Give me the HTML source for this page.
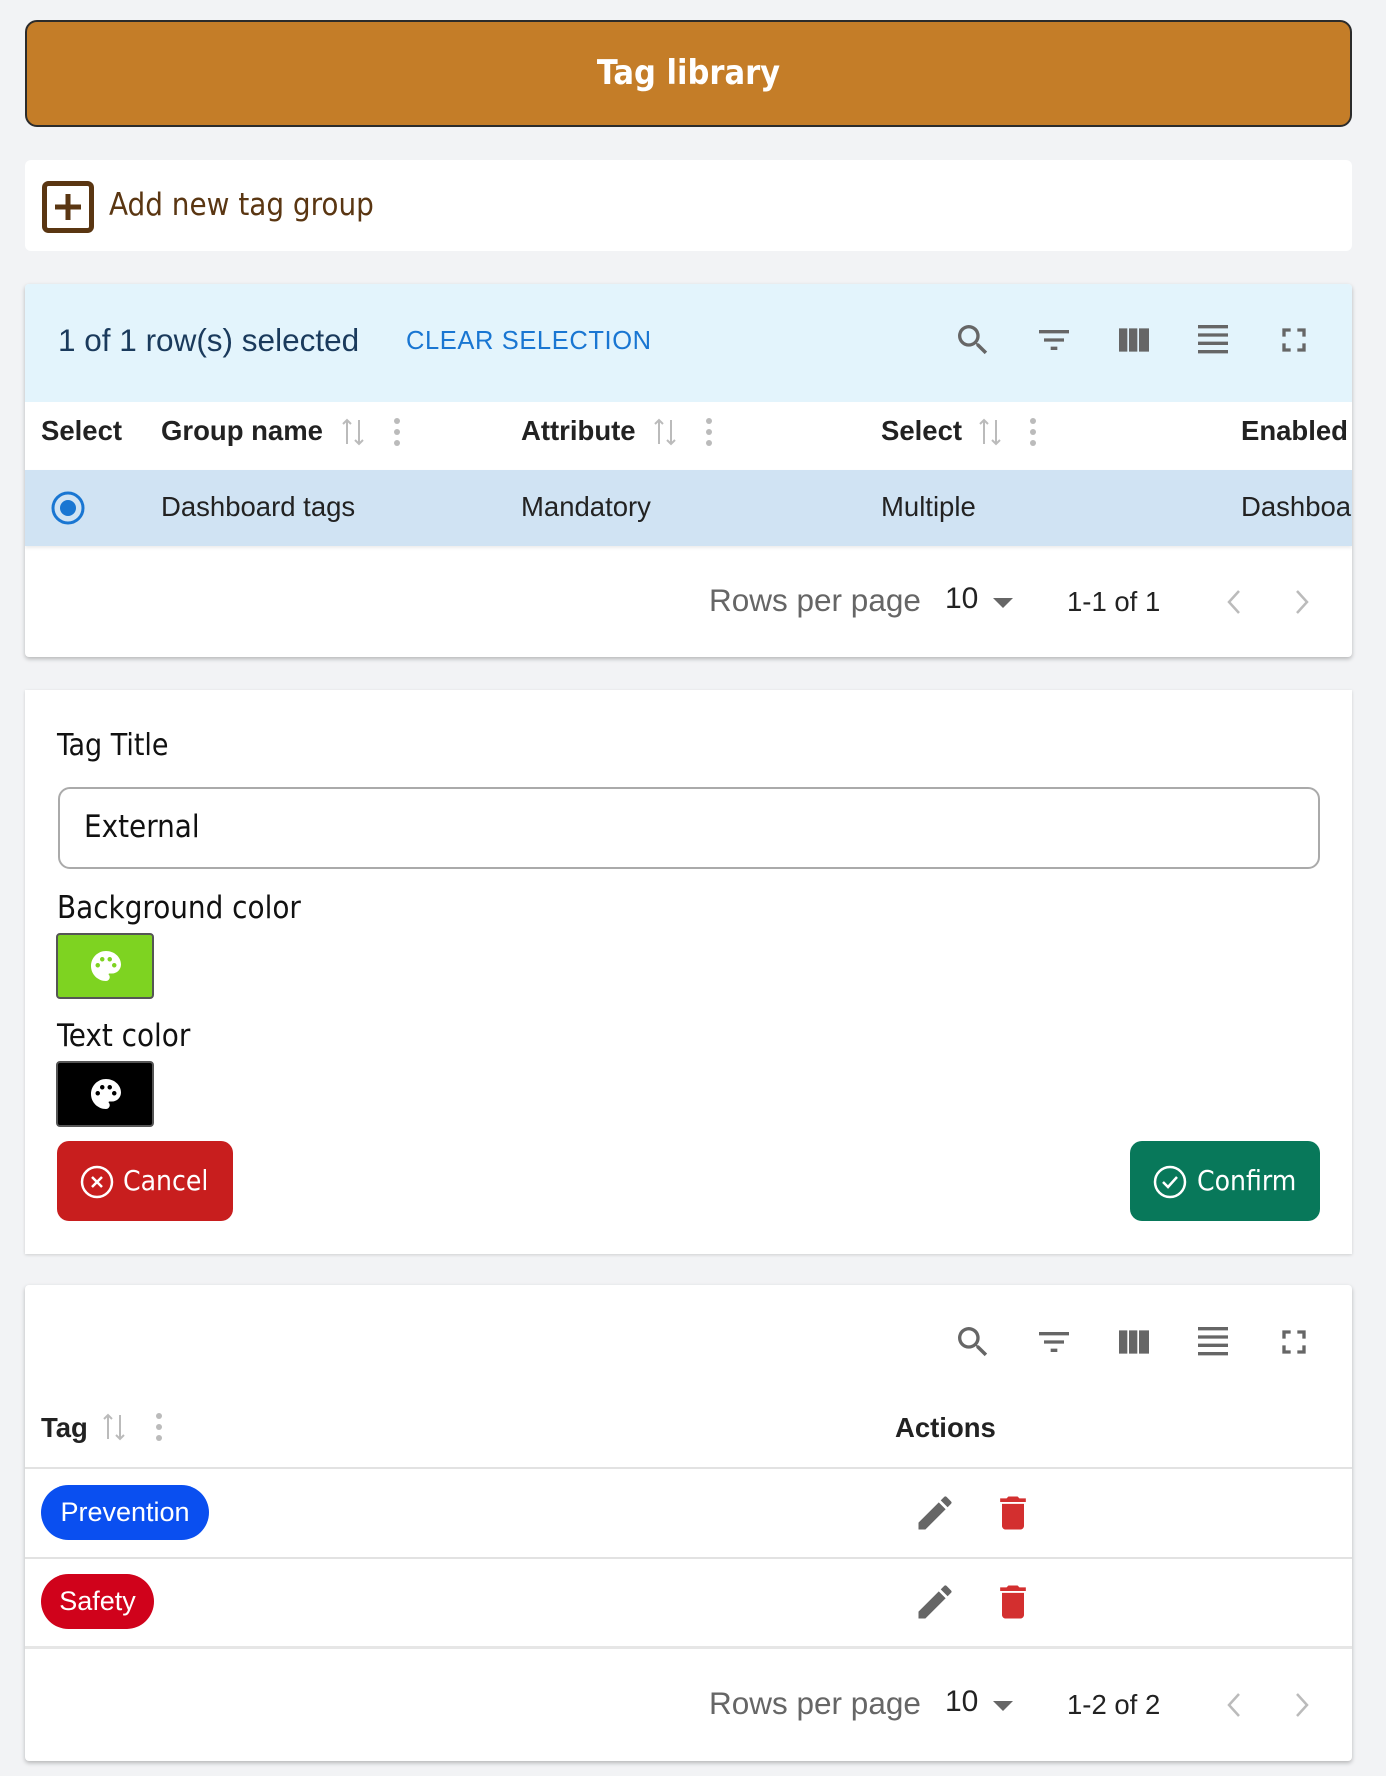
<!DOCTYPE html>
<html><head><meta charset="utf-8"><style>
*{box-sizing:border-box;margin:0;padding:0}
body{width:1386px;height:1776px;background:#f2f3f5;font-family:"Liberation Sans",Arial,sans-serif;position:relative;overflow:hidden}
.abs{position:absolute}
.card{position:absolute;left:25px;width:1327px;background:#fff}
.ic{position:absolute;width:40px;height:40px;fill:#666}
.hd{position:absolute;font-weight:bold;font-size:27.5px;color:#222;top:0}
.sort{fill:#bbb}
.t{position:absolute;font-size:27.5px;color:#222;white-space:nowrap}
.fm{font-family:'DejaVu Sans Condensed','Liberation Sans',sans-serif}
</style></head><body>

<div class="abs fm" style="left:25px;top:20px;width:1327px;height:107px;background:#c47d28;border:2px solid #2b2b2b;border-radius:12px;color:#fff;font-weight:bold;font-size:34px;text-align:center;line-height:103px">Tag library</div>

<div class="card" style="top:160px;height:91px;border-radius:6px">
  <svg class="abs" style="left:17px;top:21px" width="52" height="52" viewBox="0 0 52 52"><rect x="2.5" y="2.5" width="47" height="47" rx="4" fill="none" stroke="#5a3612" stroke-width="5"/><path d="M26 13v26M13 26h26" stroke="#5a3612" stroke-width="5"/></svg>
  <div class="abs fm" style="left:84px;top:27px;font-size:31px;color:#5a3612">Add new tag group</div>
</div>

<div class="card" style="top:284px;height:373px;box-shadow:0 2px 4px rgba(0,0,0,.25);border-radius:4px;overflow:hidden">
  <div class="abs" style="left:0;top:0;width:100%;height:118px;background:#e3f4fc"></div>
  <div class="t" style="left:33px;top:38px;font-size:31.5px;color:#1a3a5c">1 of 1 row(s) selected</div>
  <div class="t" style="left:381px;top:43px;font-size:25.5px;color:#1976d2;letter-spacing:.6px">CLEAR SELECTION</div>
  <svg class="ic" style="left:928px;top:36px" viewBox="0 0 24 24"><path d="M15.5 14h-.79l-.28-.27A6.47 6.47 0 0 0 16 9.5 6.5 6.5 0 1 0 9.5 16c1.61 0 3.09-.59 4.23-1.57l.27.28v.79l5 4.99L20.49 19zm-6 0C7.01 14 5 11.99 5 9.5S7.01 5 9.5 5 14 7.01 14 9.5 11.99 14 9.5 14"/></svg>
  <svg class="ic" style="left:1009px;top:36px" viewBox="0 0 24 24"><path d="M10 18h4v-2h-4zM3 6v2h18V6zm3 7h12v-2H6z"/></svg>
  <svg class="ic" style="left:1089px;top:36px" viewBox="0 0 24 24"><path d="M3 5h5v14H3zm6 0h5v14H9zm6 0h6v14h-6z"/></svg>
  <svg class="ic" style="left:1168px;top:36px" viewBox="0 0 24 24"><path d="M3 3h18v2H3zm0 5h18v2H3zm0 5h18v2H3zm0 5h18v2H3z"/></svg>
  <svg class="ic" style="left:1249px;top:36px" viewBox="0 0 24 24"><path d="M7 14H5v5h5v-2H7zm-2-4h2V7h3V5H5zm12 7h-3v2h5v-5h-2zM14 5v2h3v3h2V5z"/></svg>
  <div style="position:absolute;left:0;top:118px;width:100%;height:68px">
    <div class="hd" style="left:16px;top:13px">Select</div>
    <div class="hd" style="left:136px;top:13px">Group name</div>
    <div class="hd" style="left:496px;top:13px">Attribute</div>
    <div class="hd" style="left:856px;top:13px">Select</div>
    <div class="hd" style="left:1216px;top:13px">Enabled</div>
    <svg class="abs" style="left:315px;top:14px" width="26" height="32" viewBox="0 0 26 32"><path d="M7 4v24M3 8l4-4 4 4M19 4v24M15 24l4 4 4-4" stroke="#bbb" stroke-width="2" fill="none"/></svg>
    <svg class="abs" style="left:368px;top:14px" width="8" height="32"><circle cx="4" cy="5" r="3" fill="#bbb"/><circle cx="4" cy="16" r="3" fill="#bbb"/><circle cx="4" cy="27" r="3" fill="#bbb"/></svg>
    <svg class="abs" style="left:627px;top:14px" width="26" height="32" viewBox="0 0 26 32"><path d="M7 4v24M3 8l4-4 4 4M19 4v24M15 24l4 4 4-4" stroke="#bbb" stroke-width="2" fill="none"/></svg>
    <svg class="abs" style="left:680px;top:14px" width="8" height="32"><circle cx="4" cy="5" r="3" fill="#bbb"/><circle cx="4" cy="16" r="3" fill="#bbb"/><circle cx="4" cy="27" r="3" fill="#bbb"/></svg>
    <svg class="abs" style="left:952px;top:14px" width="26" height="32" viewBox="0 0 26 32"><path d="M7 4v24M3 8l4-4 4 4M19 4v24M15 24l4 4 4-4" stroke="#bbb" stroke-width="2" fill="none"/></svg>
    <svg class="abs" style="left:1004px;top:14px" width="8" height="32"><circle cx="4" cy="5" r="3" fill="#bbb"/><circle cx="4" cy="16" r="3" fill="#bbb"/><circle cx="4" cy="27" r="3" fill="#bbb"/></svg>
  </div>
  <div style="position:absolute;left:0;top:186px;width:100%;height:76px;background:#d0e3f3;box-shadow:0 2px 3px rgba(0,0,0,.08)">
    <svg class="abs" style="left:25px;top:20px" width="36" height="36"><circle cx="18" cy="18" r="15" fill="none" stroke="#1976d2" stroke-width="3"/><circle cx="18" cy="18" r="8" fill="#1976d2"/></svg>
    <div class="t" style="left:136px;top:21px">Dashboard tags</div>
    <div class="t" style="left:496px;top:21px">Mandatory</div>
    <div class="t" style="left:856px;top:21px">Multiple</div>
    <div class="t" style="left:1216px;top:21px">Dashboard</div>
  </div>
  <div class="t" style="left:684px;top:298px;font-size:31.5px;color:#666">Rows per page</div>
  <div class="t" style="left:920px;top:298px;font-size:30px;color:#222">10</div>
  <svg class="abs" style="left:968px;top:314px" width="20" height="10"><path d="M0 0h20L10 10z" fill="#666"/></svg>
  <div class="t" style="left:1042px;top:302px;font-size:27.5px;color:#222">1-1 of 1</div>
  <svg class="abs" style="left:1200px;top:304px" width="18" height="28"><path d="M14 3L4 14l10 11" stroke="#bbb" stroke-width="2.5" fill="none"/></svg>
  <svg class="abs" style="left:1268px;top:304px" width="18" height="28"><path d="M4 3l10 11L4 25" stroke="#bbb" stroke-width="2.5" fill="none"/></svg>
</div>

<div class="card fm" style="top:690px;height:564px;box-shadow:0 1px 3px rgba(0,0,0,.15)">
  <div class="abs" style="left:32px;top:38px;font-size:30px;color:#111;font-weight:500">Tag Title</div>
  <div class="abs" style="left:33px;top:97px;width:1262px;height:82px;border:2px solid #aaa;border-radius:12px"></div>
  <div class="abs" style="left:59px;top:119px;font-size:31px;color:#111">External</div>
  <div class="abs" style="left:32px;top:200px;font-size:31px;color:#111">Background color</div>
  <div class="abs" style="left:31px;top:243px;width:98px;height:66px;background:#7ed321;border:2px solid #555;border-radius:4px"></div>
  <div class="abs" style="left:32px;top:328px;font-size:31px;color:#111">Text color</div>
  <div class="abs" style="left:31px;top:371px;width:98px;height:66px;background:#000;border:2px solid #555;border-radius:4px"></div>
  <svg class="abs" style="left:63px;top:258px" width="36" height="36" viewBox="0 0 24 24"><path fill="#fff" d="M12 2C6.49 2 2 6.490 2 12s4.49 10 10 10a2.5 2.5 0 0 0 2.5-2.5c0-.61-.23-1.2-.64-1.67a.53.53 0 0 1-.13-.33c0-.28.22-.5.5-.5H16c3.31 0 6-2.69 6-6 0-4.96-4.49-9-10-9m-5.5 11a1.5 1.5 0 1 1 0-3 1.5 1.5 0 0 1 0 3m3-4a1.5 1.5 0 1 1 0-3 1.5 1.5 0 0 1 0 3m5 0a1.5 1.5 0 1 1 0-3 1.5 1.5 0 0 1 0 3m3 4a1.5 1.5 0 1 1 0-3 1.5 1.5 0 0 1 0 3"/></svg>
  <svg class="abs" style="left:63px;top:386px" width="36" height="36" viewBox="0 0 24 24"><path fill="#fff" d="M12 2C6.49 2 2 6.49 2 12s4.49 10 10 10a2.5 2.5 0 0 0 2.5-2.5c0-.61-.23-1.2-.64-1.67a.53.53 0 0 1-.13-.33c0-.28.22-.5.5-.5H16c3.31 0 6-2.69 6-6 0-4.96-4.49-9-10-9m-5.5 11a1.5 1.5 0 1 1 0-3 1.5 1.5 0 0 1 0 3m3-4a1.5 1.5 0 1 1 0-3 1.5 1.5 0 0 1 0 3m5 0a1.5 1.5 0 1 1 0-3 1.5 1.5 0 0 1 0 3m3 4a1.5 1.5 0 1 1 0-3 1.5 1.5 0 0 1 0 3"/></svg>
  <div class="abs" style="left:32px;top:451px;width:176px;height:80px;background:#c81e1e;border-radius:12px;color:#fff;font-size:28px;line-height:80px;padding-left:66px">Cancel</div>
  <svg class="abs" style="left:54px;top:474px" width="36" height="36"><circle cx="18" cy="18" r="15" fill="none" stroke="#fff" stroke-width="2.5"/><path d="M13 13l10 10M23 13L13 23" stroke="#fff" stroke-width="2.5"/></svg>
  <div class="abs" style="left:1105px;top:451px;width:190px;height:80px;background:#08785a;border-radius:12px;color:#fff;font-size:28px;line-height:80px;padding-left:67px">Confirm</div>
  <svg class="abs" style="left:1127px;top:474px" width="36" height="36"><circle cx="18" cy="18" r="15" fill="none" stroke="#fff" stroke-width="2.5"/><path d="M11 18l5 5 9-10" stroke="#fff" stroke-width="2.5" fill="none"/></svg>
</div>

<div class="card" style="top:1285px;height:476px;box-shadow:0 2px 4px rgba(0,0,0,.25);border-radius:4px">
  <svg class="ic" style="left:928px;top:37px" viewBox="0 0 24 24"><path d="M15.5 14h-.79l-.28-.27A6.47 6.47 0 0 0 16 9.5 6.5 6.5 0 1 0 9.5 16c1.61 0 3.09-.59 4.23-1.57l.27.28v.79l5 4.99L20.49 19zm-6 0C7.01 14 5 11.99 5 9.5S7.01 5 9.5 5 14 7.01 14 9.5 11.99 14 9.5 14"/></svg>
  <svg class="ic" style="left:1009px;top:37px" viewBox="0 0 24 24"><path d="M10 18h4v-2h-4zM3 6v2h18V6zm3 7h12v-2H6z"/></svg>
  <svg class="ic" style="left:1089px;top:37px" viewBox="0 0 24 24"><path d="M3 5h5v14H3zm6 0h5v14H9zm6 0h6v14h-6z"/></svg>
  <svg class="ic" style="left:1168px;top:37px" viewBox="0 0 24 24"><path d="M3 3h18v2H3zm0 5h18v2H3zm0 5h18v2H3zm0 5h18v2H3z"/></svg>
  <svg class="ic" style="left:1249px;top:37px" viewBox="0 0 24 24"><path d="M7 14H5v5h5v-2H7zm-2-4h2V7h3V5H5zm12 7h-3v2h5v-5h-2zM14 5v2h3v3h2V5z"/></svg>
  <div class="hd" style="left:16px;top:127px">Tag</div>
  <svg class="abs" style="left:76px;top:126px" width="26" height="32" viewBox="0 0 26 32"><path d="M7 4v24M3 8l4-4 4 4M19 4v24M15 24l4 4 4-4" stroke="#bbb" stroke-width="2" fill="none"/></svg>
  <svg class="abs" style="left:130px;top:126px" width="8" height="32"><circle cx="4" cy="5" r="3" fill="#bbb"/><circle cx="4" cy="16" r="3" fill="#bbb"/><circle cx="4" cy="27" r="3" fill="#bbb"/></svg>
  <div class="hd" style="left:870px;top:127px">Actions</div>
  <div class="abs" style="left:0;top:182px;width:100%;height:2px;background:#e2e2e2"></div>
  <div class="abs" style="left:16px;top:200px;width:168px;height:55px;background:#0a4ff0;border-radius:28px;color:#fff;font-size:27px;line-height:55px;text-align:center">Prevention</div>
  <div class="abs" style="left:0;top:272px;width:100%;height:2px;background:#e2e2e2"></div>
  <div class="abs" style="left:16px;top:289px;width:113px;height:55px;background:#d0021b;border-radius:28px;color:#fff;font-size:27px;line-height:55px;text-align:center">Safety</div>
  <div class="abs" style="left:0;top:361px;width:100%;height:3px;background:#e6e6e6"></div>
  <svg class="abs" style="left:888px;top:206px" width="44" height="44" viewBox="0 0 24 24"><path fill="#666" d="M3 17.25V21h3.75L17.81 9.94l-3.75-3.75zM20.71 7.04a1 1 0 0 0 0-1.41l-2.34-2.34a1 1 0 0 0-1.41 0l-1.83 1.83 3.75 3.75z"/></svg>
  <svg class="abs" style="left:966px;top:206px" width="44" height="44" viewBox="0 0 24 24"><path fill="#d32f2f" d="M6 19c0 1.1.9 2 2 2h8c1.1 0 2-.9 2-2V7H6zM19 4h-3.5l-1-1h-5l-1 1H5v2h14z"/></svg>
  <svg class="abs" style="left:888px;top:295px" width="44" height="44" viewBox="0 0 24 24"><path fill="#666" d="M3 17.25V21h3.75L17.81 9.94l-3.75-3.75zM20.71 7.04a1 1 0 0 0 0-1.41l-2.34-2.34a1 1 0 0 0-1.41 0l-1.83 1.83 3.75 3.75z"/></svg>
  <svg class="abs" style="left:966px;top:295px" width="44" height="44" viewBox="0 0 24 24"><path fill="#d32f2f" d="M6 19c0 1.1.9 2 2 2h8c1.1 0 2-.9 2-2V7H6zM19 4h-3.5l-1-1h-5l-1 1H5v2h14z"/></svg>
  <div class="t" style="left:684px;top:400px;font-size:31.5px;color:#666">Rows per page</div>
  <div class="t" style="left:920px;top:400px;font-size:30px;color:#222">10</div>
  <svg class="abs" style="left:968px;top:416px" width="20" height="10"><path d="M0 0h20L10 10z" fill="#666"/></svg>
  <div class="t" style="left:1042px;top:404px;font-size:27.5px;color:#222">1-2 of 2</div>
  <svg class="abs" style="left:1200px;top:406px" width="18" height="28"><path d="M14 3L4 14l10 11" stroke="#bbb" stroke-width="2.5" fill="none"/></svg>
  <svg class="abs" style="left:1268px;top:406px" width="18" height="28"><path d="M4 3l10 11L4 25" stroke="#bbb" stroke-width="2.5" fill="none"/></svg>
</div>
</body></html>
